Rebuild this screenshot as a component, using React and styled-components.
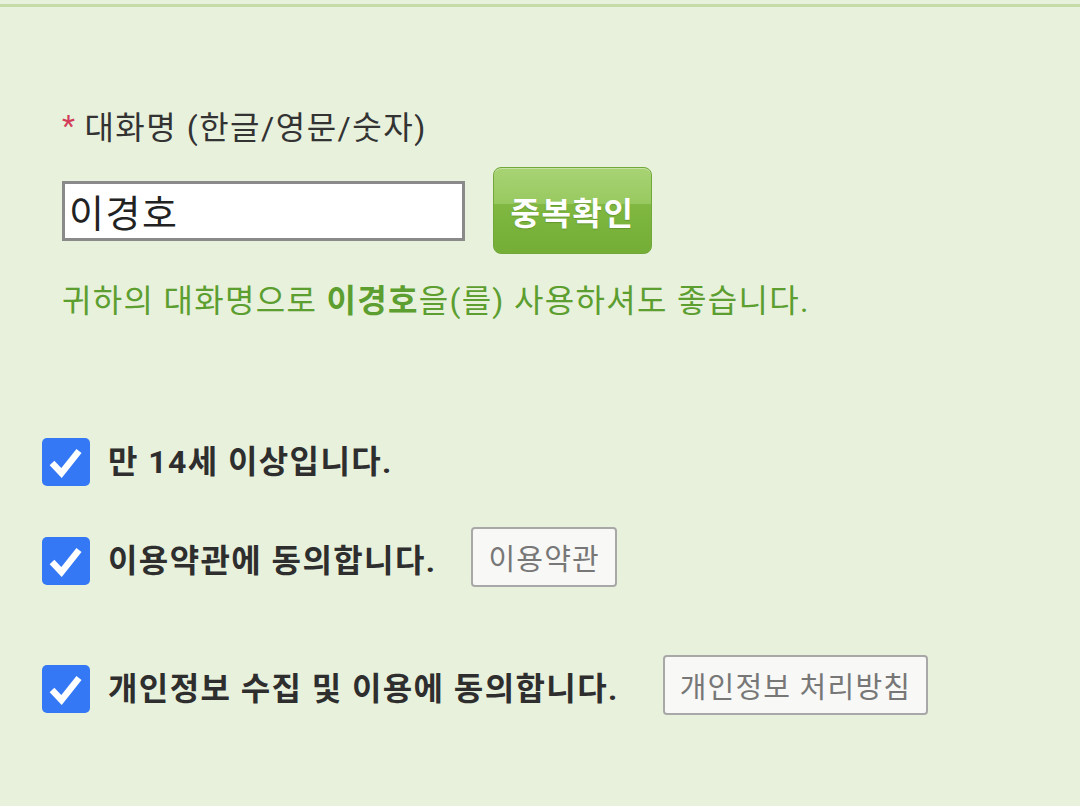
import React from "react";
import styled, { createGlobalStyle } from "styled-components";

const GlobalStyle = createGlobalStyle`
  html, body {
    margin: 0;
    padding: 0;
    background: #e8f1dc;
  }
  body {
    font-family: Roboto, "Noto Sans CJK KR", "Noto Sans", sans-serif;
    color: #333;
  }
`;

const Page = styled.div`
  width: 1080px;
  min-height: 806px;
  background: #e8f1dc;
  padding-top: 4px;
  box-sizing: border-box;
`;

const TopLine = styled.div`
  height: 3px;
  background: #c6dca8;
`;

const NameSection = styled.section`
  padding: 0 0 0 62px;
`;

const Label = styled.div`
  margin-top: 101px;
  font-size: 32px;
  letter-spacing: 1.5px;
  line-height: 40px;
  color: #333;
  display: flex;
  align-items: center;
`;

const Star = styled.span`
  color: #d23c58;
  font-size: 30px;
  margin-right: 8px;
  position: relative;
  top: -2px;
`;

const InputRow = styled.div`
  margin-top: 19px;
  display: flex;
  align-items: center;
  gap: 28px;
`;

const NameInput = styled.input`
  box-sizing: border-box;
  width: 403px;
  height: 60px;
  border: 3px solid #8a8a8a;
  background: #fff;
  font-family: Roboto, "Noto Sans CJK KR", sans-serif;
  font-size: 38px;
  letter-spacing: 1.5px;
  color: #222;
  padding: 0 0 0 4px;
  outline: none;
  border-radius: 0;
`;

const CheckButton = styled.button`
  box-sizing: border-box;
  width: 159px;
  height: 87px;
  border: 1px solid #72a83a;
  border-radius: 8px;
  background: linear-gradient(
    to bottom,
    #a8d374 0%,
    #98c960 42%,
    #80b842 42%,
    #74ae36 100%
  );
  box-shadow: inset 0 1px 0 rgba(255, 255, 255, 0.35);
  color: #fff;
  font-family: Roboto, "Noto Sans CJK KR", sans-serif;
  font-weight: 700;
  font-size: 32px;
  letter-spacing: 1.5px;
  padding: 0;
  cursor: pointer;
  text-shadow: 0 1px 1px rgba(60, 100, 20, 0.35);
`;

const Message = styled.p`
  margin: 27px 0 0 0;
  font-size: 32px;
  letter-spacing: 1.3px;
  line-height: 40px;
  color: #5c9e2f;

  strong {
    font-weight: 700;
  }
`;

const AgreeSection = styled.section`
  padding-left: 42px;
  display: flex;
  flex-direction: column;
`;

const AgreeRow = styled.label`
  display: flex;
  align-items: center;
  margin-top: ${(p) => p.$gap}px;
`;

const Box = styled.span`
  flex: none;
  width: 48px;
  height: 48px;
  border-radius: 5px;
  background: #3478f6;
  display: flex;
  align-items: center;
  justify-content: center;
`;

const AgreeText = styled.span`
  margin-left: 18px;
  font-size: 32px;
  letter-spacing: 1.4px;
  font-weight: 700;
  color: #2e2e2e;
  line-height: 40px;
`;

const DocButton = styled.button`
  box-sizing: border-box;
  height: 60px;
  margin-left: ${(p) => p.$offset}px;
  margin-bottom: 8px;
  padding: 0 15px;
  background: #f8f8f6;
  border: 2px solid #a8a8a8;
  border-radius: 4px;
  color: #777;
  font-family: Roboto, "Noto Sans CJK KR", sans-serif;
  font-size: 29px;
  letter-spacing: 1.2px;
  cursor: pointer;
`;

const Check = () => (
  <svg width="48" height="48" viewBox="0 0 48 48" aria-hidden="true">
    <polyline
      points="10,25 19.5,35 37,13"
      fill="none"
      stroke="#fff"
      strokeWidth="6.5"
      strokeLinecap="butt"
      strokeLinejoin="miter"
    />
  </svg>
);

export default function App() {
  return (
    <>
      <GlobalStyle />
      <Page>
        <TopLine />
        <NameSection>
          <Label>
            <Star>*</Star>대화명 (한글/영문/숫자)
          </Label>
          <InputRow>
            <NameInput defaultValue="이경호" />
            <CheckButton type="button">중복확인</CheckButton>
          </InputRow>
          <Message>
            귀하의 대화명으로 <strong>이경호</strong>을(를) 사용하셔도 좋습니다.
          </Message>
        </NameSection>
        <AgreeSection>
          <AgreeRow $gap={117}>
            <Box>
              <Check />
            </Box>
            <AgreeText>만 14세 이상입니다.</AgreeText>
          </AgreeRow>
          <AgreeRow $gap={41}>
            <Box>
              <Check />
            </Box>
            <AgreeText>이용약관에 동의합니다.</AgreeText>
            <DocButton type="button" $offset={35}>
              이용약관
            </DocButton>
          </AgreeRow>
          <AgreeRow $gap={60}>
            <Box>
              <Check />
            </Box>
            <AgreeText>개인정보 수집 및 이용에 동의합니다.</AgreeText>
            <DocButton type="button" $offset={44}>
              개인정보 처리방침
            </DocButton>
          </AgreeRow>
        </AgreeSection>
      </Page>
    </>
  );
}
